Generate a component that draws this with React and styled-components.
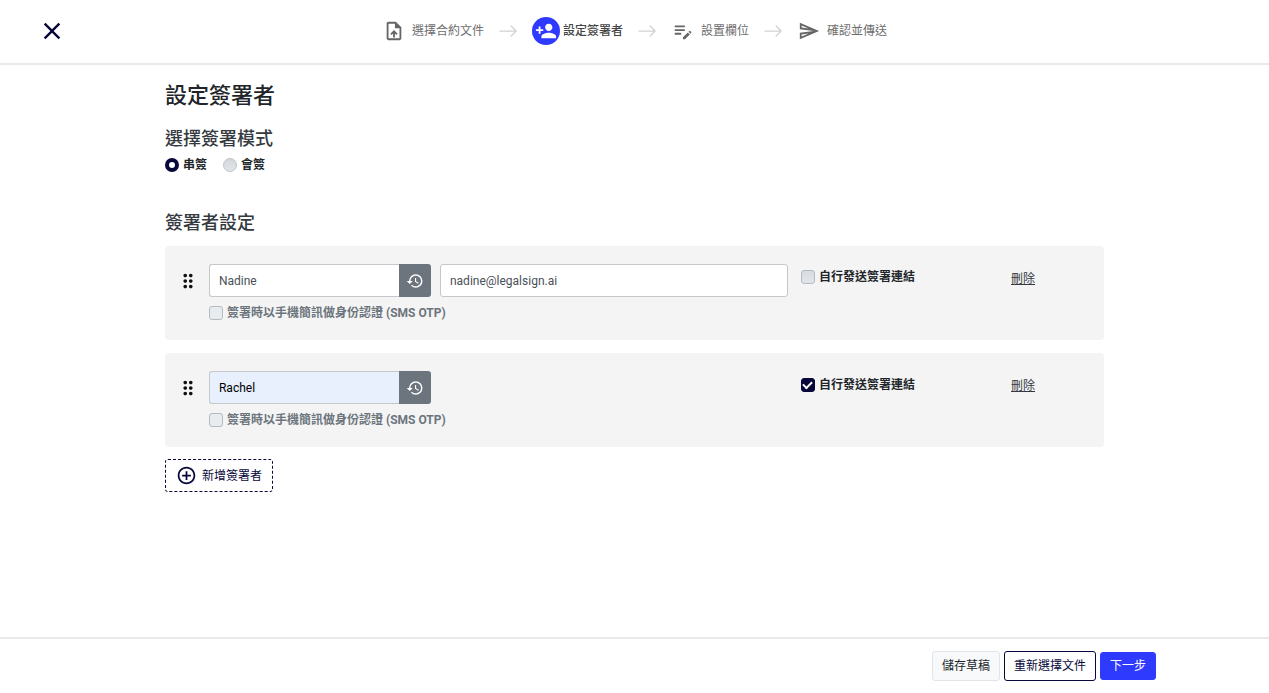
import { useState } from 'react';
import styled, { createGlobalStyle, css } from 'styled-components';
import {
  MdAddCircleOutline,
  MdClose,
  MdDragIndicator,
  MdHistory,
  MdOutlineEditNote,
  MdOutlineSend,
  MdOutlineUploadFile,
  MdPersonAdd,
} from 'react-icons/md';
import { BsArrowRight } from 'react-icons/bs';

const NAVY = '#07073a';
const BLUE = '#2e3bff';

const GlobalStyle = createGlobalStyle`
  * {
    box-sizing: border-box;
  }

  body {
    margin: 0;
    background: #fff;
    color: #212529;
    font-family: Roboto, "Noto Sans CJK TC", sans-serif;
    font-size: 12px;
    line-height: 18px;
  }

  button, input {
    font: inherit;
  }
`;

const Page = styled.div`
  display: flex;
  flex-direction: column;
  min-height: 100vh;
`;

const Header = styled.header`
  display: grid;
  grid-template-columns: 1fr auto 1fr;
  align-items: center;
  padding: 15px 38px 16px;
  border-bottom: 2px solid #e9e9ea;
`;

const CloseButton = styled.button`
  display: flex;
  justify-self: start;
  padding: 0;
  border: 0;
  background: none;
  color: ${NAVY};
  font-size: 28px;
  cursor: pointer;
`;

const Steps = styled.ol`
  display: flex;
  align-items: center;
  gap: 14px;
  height: 32px;
  margin: 0;
  padding: 0;
  list-style: none;
`;

const Step = styled.li`
  display: flex;
  align-items: center;
  gap: 14px;
`;

const StepLabel = styled.span`
  display: flex;
  align-items: center;
  gap: 7px;
  padding-left: 1px;
  color: #6d6d6d;

  ${(props) => props.$active && css`
    gap: 3px;
    padding-left: 0;
    color: #444;
    font-weight: 500;
  `}
`;

const StepIcon = styled.span`
  display: flex;
  color: #666;
  font-size: 22px;

  ${(props) => props.$active && css`
    padding: 3px;
    border-radius: 50%;
    background: ${BLUE};
    color: #fff;
  `}
`;

const StepArrow = styled(BsArrowRight)`
  color: #d2d2d2;
  font-size: 20px;
`;

const Main = styled.main`
  flex: 1;
  width: 74%;
  margin: 0 auto;
  padding: 17px 0;
`;

const Title = styled.h1`
  margin: 0 0 15px;
  font-size: 22px;
  font-weight: 500;
  line-height: 28px;
`;

const SectionTitle = styled.h2`
  margin: 0;
  color: #343a40;
  font-size: 18px;
  font-weight: 500;
  line-height: 28px;
`;

const ModeList = styled.div`
  display: flex;
  gap: 16px;
  margin: 3px 0 35px;
`;

const CheckLabel = styled.label`
  display: inline-flex;
  align-items: center;
  gap: 4px;
  color: ${(props) => (props.$muted ? '#6c757d' : '#212529')};
  font-weight: 700;
  white-space: nowrap;
`;

const Radio = styled.input.attrs({ type: 'radio' })`
  appearance: none;
  width: 14px;
  height: 14px;
  margin: 0;
  border: 1px solid #c0c4c9;
  border-radius: 50%;
  background: linear-gradient(#d3d7db, #e2e5e8);

  &:checked {
    border: 4px solid ${NAVY};
    background: #fff;
  }
`;

const Checkbox = styled.input.attrs({ type: 'checkbox' })`
  appearance: none;
  display: grid;
  place-items: center;
  width: 14px;
  height: 14px;
  margin: 0;
  border: 1px solid #b3bac2;
  border-radius: 3px;
  background: ${(props) => (props.$light ? '#e9ecef' : 'linear-gradient(#d8dce0, #e1e5e9)')};

  &:checked {
    border-color: ${NAVY};
    background: ${NAVY};
  }

  &:checked::after {
    content: '';
    width: 7px;
    height: 4px;
    border: solid #fff;
    border-width: 0 0 2px 2px;
    transform: translateY(-1px) rotate(-45deg);
  }
`;

const SignerList = styled.ul`
  display: grid;
  gap: 13px;
  margin: 9px 0 12px;
  padding: 0;
  list-style: none;
`;

const SignerCard = styled.li`
  display: grid;
  grid-template-columns: 23px 222fr 348fr 205fr 81fr;
  column-gap: 9px;
  row-gap: 7px;
  padding: 18px 12px;
  border-radius: 4px;
  background: #f4f4f4;
`;

const DragHandle = styled.button`
  display: flex;
  align-items: center;
  justify-content: center;
  padding: 0;
  border: 0;
  background: none;
  color: #111;
  font-size: 22px;
  cursor: grab;
`;

const InputGroup = styled.div`
  display: flex;
`;

const TextInput = styled.input`
  width: 100%;
  min-width: 0;
  height: 33px;
  padding: 0 9px;
  border: 1px solid #c4c8cc;
  border-radius: 3px;
  background: #fff;
  color: #495057;
  outline: 0;

  ${InputGroup} & {
    border-right: 0;
    border-radius: 3px 0 0 3px;
  }

  ${(props) => props.$filled && css`
    background: #e8f0fe;
    color: #000;
  `}
`;

const HistoryButton = styled.button`
  display: flex;
  flex: 0 0 32px;
  align-items: center;
  justify-content: center;
  padding: 0;
  border: 0;
  border-radius: 0 3px 3px 0;
  background: #6c757d;
  color: #fff;
  font-size: 18px;
`;

const SelfSend = styled.div`
  grid-column: 4;
  padding: 4px;
`;

const DeleteCell = styled.div`
  grid-column: 5;
  padding-top: 6px;
`;

const DeleteLink = styled.a`
  color: #343a40;
  text-decoration: underline;
`;

const SmsRow = styled.div`
  grid-column: 2 / 4;
  display: flex;
`;

const AddButton = styled.button`
  display: inline-flex;
  align-items: center;
  gap: 5px;
  height: 33px;
  padding: 0 10px;
  border: 1px dashed ${NAVY};
  border-radius: 3px;
  background: #fff;
  color: ${NAVY};

  svg {
    font-size: 21px;
  }
`;

const Footer = styled.footer`
  display: flex;
  align-items: center;
  justify-content: flex-end;
  gap: 4px;
  padding: 12px 113px;
  border-top: 2px solid #e9e9ea;
`;

const FooterButton = styled.button`
  height: 30px;
  padding: 0 9px;
  border: 1px solid ${(props) => props.$border};
  border-radius: 3px;
  background: ${(props) => props.$background};
  color: ${(props) => props.$color};
`;

const NextButton = styled(FooterButton)`
  height: 28px;
`;

const steps = [
  { label: '選擇合約文件', icon: MdOutlineUploadFile },
  { label: '設定簽署者', icon: MdPersonAdd, active: true },
  { label: '設置欄位', icon: MdOutlineEditNote },
  { label: '確認並傳送', icon: MdOutlineSend },
];

const initialSigners = [
  { id: 1, name: 'Nadine', email: 'nadine@legalsign.ai', selfSend: false },
  { id: 2, name: 'Rachel', email: '', selfSend: true, filled: true },
];

function StepBar() {
  return (
    <Steps>
      {steps.map(({ label, icon: Icon, active }, index) => (
        <Step key={label}>
          <StepLabel $active={active}>
            <StepIcon $active={active}><Icon /></StepIcon>
            {label}
          </StepLabel>
          {index < steps.length - 1 && <StepArrow />}
        </Step>
      ))}
    </Steps>
  );
}

function SignerRow({ signer, onChange, onDelete }) {
  return (
    <SignerCard>
      <DragHandle type="button" aria-label="排序"><MdDragIndicator /></DragHandle>
      <InputGroup>
        <TextInput
          aria-label="姓名"
          value={signer.name}
          $filled={signer.filled}
          onChange={(e) => onChange({ name: e.target.value })}
        />
        <HistoryButton type="button" aria-label="歷史紀錄"><MdHistory /></HistoryButton>
      </InputGroup>
      {!signer.selfSend && (
        <TextInput
          type="email"
          aria-label="Email"
          value={signer.email}
          onChange={(e) => onChange({ email: e.target.value })}
        />
      )}
      <SelfSend>
        <CheckLabel>
          <Checkbox
            checked={signer.selfSend}
            onChange={(e) => onChange({ selfSend: e.target.checked })}
          />
          自行發送簽署連結
        </CheckLabel>
      </SelfSend>
      <DeleteCell>
        <DeleteLink href="#" onClick={onDelete}>刪除</DeleteLink>
      </DeleteCell>
      <SmsRow>
        <CheckLabel $muted>
          <Checkbox $light />
          簽署時以手機簡訊做身份認證 (SMS OTP)
        </CheckLabel>
      </SmsRow>
    </SignerCard>
  );
}

function App() {
  const [signers, setSigners] = useState(initialSigners);

  const updateSigner = (id, values) => {
    setSigners(signers.map((x) => (x.id === id ? { ...x, ...values } : x)));
  };

  const addSigner = () => {
    setSigners([...signers, { id: Date.now(), name: '', email: '', selfSend: false }]);
  };

  return (
    <Page>
      <GlobalStyle />
      <Header>
        <CloseButton type="button" aria-label="關閉"><MdClose /></CloseButton>
        <StepBar />
      </Header>
      <Main>
        <Title>設定簽署者</Title>
        <SectionTitle>選擇簽署模式</SectionTitle>
        <ModeList>
          <CheckLabel><Radio name="mode" defaultChecked />串簽</CheckLabel>
          <CheckLabel><Radio name="mode" />會簽</CheckLabel>
        </ModeList>
        <SectionTitle>簽署者設定</SectionTitle>
        <SignerList>
          {signers.map((x) => (
            <SignerRow
              key={x.id}
              signer={x}
              onChange={(values) => updateSigner(x.id, values)}
              onDelete={() => setSigners(signers.filter((s) => s.id !== x.id))}
            />
          ))}
        </SignerList>
        <AddButton type="button" onClick={addSigner}>
          <MdAddCircleOutline />
          新增簽署者
        </AddButton>
      </Main>
      <Footer>
        <FooterButton type="button" $border="#e2e4e7" $background="#f8f9fa" $color="#212529">儲存草稿</FooterButton>
        <FooterButton type="button" $border={NAVY} $background="#fff" $color={NAVY}>重新選擇文件</FooterButton>
        <NextButton type="button" $border={BLUE} $background={BLUE} $color="#fff">下一步</NextButton>
      </Footer>
    </Page>
  );
}

export default App;
